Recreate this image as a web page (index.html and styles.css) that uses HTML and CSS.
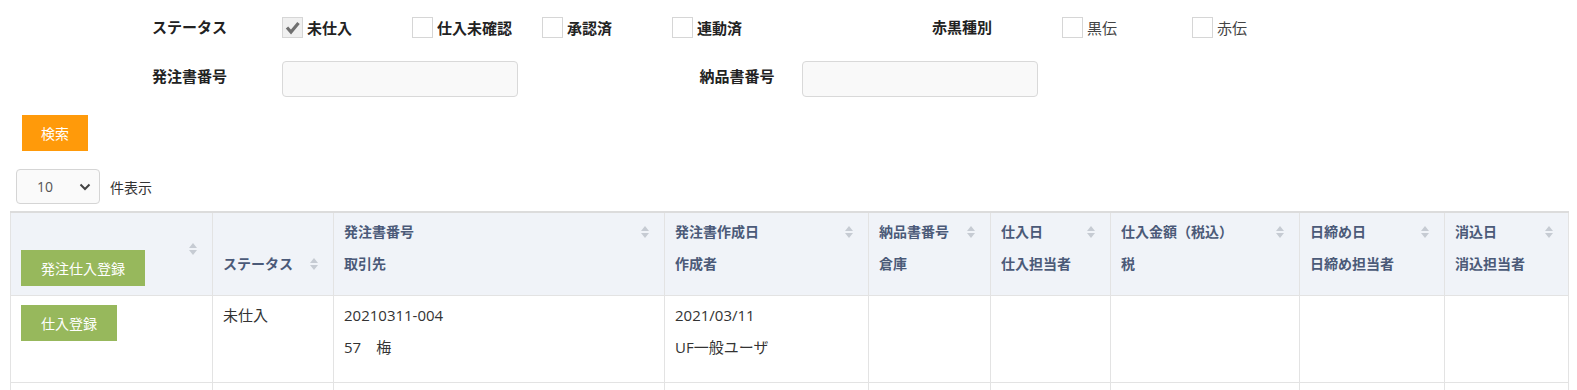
FILE: index.html
```html
<!DOCTYPE html>
<html lang="ja">
<head>
    <meta charset="UTF-8">
    <meta name="viewport" content="width=device-width, initial-scale=1.0">
    <title>仕入一覧</title>
    <link rel="stylesheet" href="styles.css">
</head>
<body>
    <div class="search">
        <div class="filter-grid">
            <div class="f-label">ステータス</div>
            <label class="check">
                <span class="box checked">
                    <svg width="17" height="17" viewBox="0 0 17 17"><path d="M3 8.5 L7 13 L14.5 4" fill="none" stroke="#707070" stroke-width="3.2"/></svg>
                </span>
                未仕入
            </label>
            <label class="check"><span class="box"></span>仕入未確認</label>
            <label class="check"><span class="box"></span>承認済</label>
            <label class="check"><span class="box"></span>連動済</label>
            <div></div>
            <div class="f-label">赤黒種別</div>
            <label class="check light"><span class="box"></span>黒伝</label>
            <label class="check light"><span class="box"></span>赤伝</label>

            <div class="f-label top">発注書番号</div>
            <input class="text-input" type="text">
            <div></div>
            <div class="f-label top centered">納品書番号</div>
            <input class="text-input" type="text">
        </div>

        <button class="btn-search">検索</button>
    </div>

    <div class="length">
        <div class="select-box">
            <span>10</span>
            <svg width="12" height="8" viewBox="0 0 12 8"><path d="M1.5 1.5 L6 6 L10.5 1.5" fill="none" stroke="#444" stroke-width="2"/></svg>
        </div>
        <span class="length-text">件表示</span>
    </div>

    <table class="list">
        <colgroup>
            <col style="width: 202px">
            <col style="width: 121px">
            <col style="width: 331px">
            <col style="width: 204px">
            <col style="width: 122px">
            <col style="width: 120px">
            <col style="width: 189px">
            <col style="width: 145px">
            <col style="width: 124px">
        </colgroup>
        <thead>
            <tr>
                <th class="th-btn">
                    <div class="th-first">
                        <button class="btn-green">発注仕入登録</button>
                        <svg class="sort" width="8" height="14" viewBox="0 0 8 14"><path d="M0 6 L4 1 L8 6 Z M0 8 L4 13 L8 8 Z"/></svg>
                    </div>
                </th>
                <th>
                    <div class="th-line"></div>
                    <div class="th-line th-inline">ステータス<svg class="sort" width="8" height="14" viewBox="0 0 8 14"><path d="M0 6 L4 1 L8 6 Z M0 8 L4 13 L8 8 Z"/></svg></div>
                </th>
                <th>
                    <div class="th-line">発注書番号<svg class="sort" width="8" height="14" viewBox="0 0 8 14"><path d="M0 6 L4 1 L8 6 Z M0 8 L4 13 L8 8 Z"/></svg></div>
                    <div class="th-line">取引先</div>
                </th>
                <th>
                    <div class="th-line">発注書作成日<svg class="sort" width="8" height="14" viewBox="0 0 8 14"><path d="M0 6 L4 1 L8 6 Z M0 8 L4 13 L8 8 Z"/></svg></div>
                    <div class="th-line">作成者</div>
                </th>
                <th>
                    <div class="th-line">納品書番号<svg class="sort" width="8" height="14" viewBox="0 0 8 14"><path d="M0 6 L4 1 L8 6 Z M0 8 L4 13 L8 8 Z"/></svg></div>
                    <div class="th-line">倉庫</div>
                </th>
                <th>
                    <div class="th-line">仕入日<svg class="sort" width="8" height="14" viewBox="0 0 8 14"><path d="M0 6 L4 1 L8 6 Z M0 8 L4 13 L8 8 Z"/></svg></div>
                    <div class="th-line">仕入担当者</div>
                </th>
                <th>
                    <div class="th-line">仕入金額（税込）<svg class="sort" width="8" height="14" viewBox="0 0 8 14"><path d="M0 6 L4 1 L8 6 Z M0 8 L4 13 L8 8 Z"/></svg></div>
                    <div class="th-line">税</div>
                </th>
                <th>
                    <div class="th-line">日締め日<svg class="sort" width="8" height="14" viewBox="0 0 8 14"><path d="M0 6 L4 1 L8 6 Z M0 8 L4 13 L8 8 Z"/></svg></div>
                    <div class="th-line">日締め担当者</div>
                </th>
                <th>
                    <div class="th-line">消込日<svg class="sort" width="8" height="14" viewBox="0 0 8 14"><path d="M0 6 L4 1 L8 6 Z M0 8 L4 13 L8 8 Z"/></svg></div>
                    <div class="th-line">消込担当者</div>
                </th>
            </tr>
        </thead>
        <tbody>
            <tr>
                <td class="td-btn"><button class="btn-green">仕入登録</button></td>
                <td>未仕入</td>
                <td>20210311-004<br>57　梅</td>
                <td>2021/03/11<br>UF一般ユーザ</td>
                <td></td>
                <td></td>
                <td></td>
                <td></td>
                <td></td>
            </tr>
            <tr class="empty-row">
                <td></td><td></td><td></td><td></td><td></td><td></td><td></td><td></td><td></td>
            </tr>
        </tbody>
    </table>
</body>
</html>
```

FILE: styles.css
```css
body {
    margin: 0;
    padding: 0;
    background: #fff;
    color: #333;
    font-family: "Open Sans", "Noto Sans CJK JP", sans-serif;
    font-size: 15px;
}

/* Search form */
.search {
    padding-top: 12px;
}

.filter-grid {
    display: grid;
    grid-template-columns: repeat(9, 130px);
    grid-template-rows: 30px 36px;
    row-gap: 19px;
    margin-left: 152px;
}

.f-label {
    font-weight: bold;
    font-size: 15px;
    line-height: 30px;
    color: #222;
}

.f-label.top {
    line-height: 22px;
    padding-top: 4px;
}

.f-label.centered {
    text-align: center;
}

.check {
    display: flex;
    align-items: center;
    gap: 4px;
    font-weight: bold;
    font-size: 15px;
    color: #222;
    white-space: nowrap;
}

.check.light {
    font-weight: normal;
    color: #444;
}

.box {
    width: 19px;
    height: 19px;
    border: 1px solid #d6d6d6;
    background: #fff;
    display: flex;
    align-items: center;
    justify-content: center;
}

.box.checked {
    background: #f0f0f0;
}

.text-input {
    grid-column: span 2;
    width: 236px;
    height: 36px;
    box-sizing: border-box;
    border: 1px solid #d9d9d9;
    border-radius: 4px;
    background: #f9f9f9;
    margin: 0;
}

.btn-search {
    display: block;
    margin: 18px 0 0 22px;
    height: 36px;
    padding: 0 19px;
    border: none;
    background: #ff9a0a;
    color: #fff;
    font-family: inherit;
    font-size: 14px;
}

/* Page length */
.length {
    display: flex;
    align-items: center;
    gap: 10px;
    margin: 18px 0 0 16px;
}

.select-box {
    width: 84px;
    height: 35px;
    box-sizing: border-box;
    border: 1px solid #d5d5d5;
    border-radius: 4px;
    background: #fafafa;
    display: flex;
    align-items: center;
    justify-content: space-between;
    padding: 0 8px 0 20px;
    color: #555;
    font-size: 14px;
}

.length-text {
    font-size: 14px;
    color: #333;
}

/* Table */
.list {
    margin: 7px 10px 0 10px;
    width: 1558px;
    table-layout: fixed;
    border-collapse: collapse;
    border-top: 2px solid #dcdcdc;
}

.list th,
.list td {
    border: 1px solid #e3e3e3;
    text-align: left;
    vertical-align: top;
}

.list th {
    background: #f0f3f8;
    color: #4b5a78;
    font-weight: bold;
    font-size: 14px;
    padding: 3px 15px 15px 10px;
}

.th-line {
    height: 32px;
    line-height: 32px;
    display: flex;
    justify-content: space-between;
    align-items: center;
    white-space: nowrap;
}

.th-inline {
    justify-content: flex-start;
    gap: 17px;
}

.list th.th-btn {
    padding: 3px 15px 9px 10px;
}

.th-first {
    display: flex;
    justify-content: space-between;
    align-items: flex-start;
}

.th-first .btn-green {
    margin-top: 34px;
}

.th-first .sort {
    margin-top: 26px;
}

.sort {
    fill: #c6cbd3;
    flex-shrink: 0;
}

.list td {
    padding: 3px 10px 19px;
    line-height: 32px;
    font-size: 15px;
    color: #333;
}

.list td.td-btn {
    padding-top: 9px;
}

.empty-row td {
    height: 40px;
}

.btn-green {
    display: block;
    height: 36px;
    padding: 0 20px;
    border: none;
    background: #97b85c;
    color: #fff;
    font-family: inherit;
    font-size: 14px;
    white-space: nowrap;
}
```
